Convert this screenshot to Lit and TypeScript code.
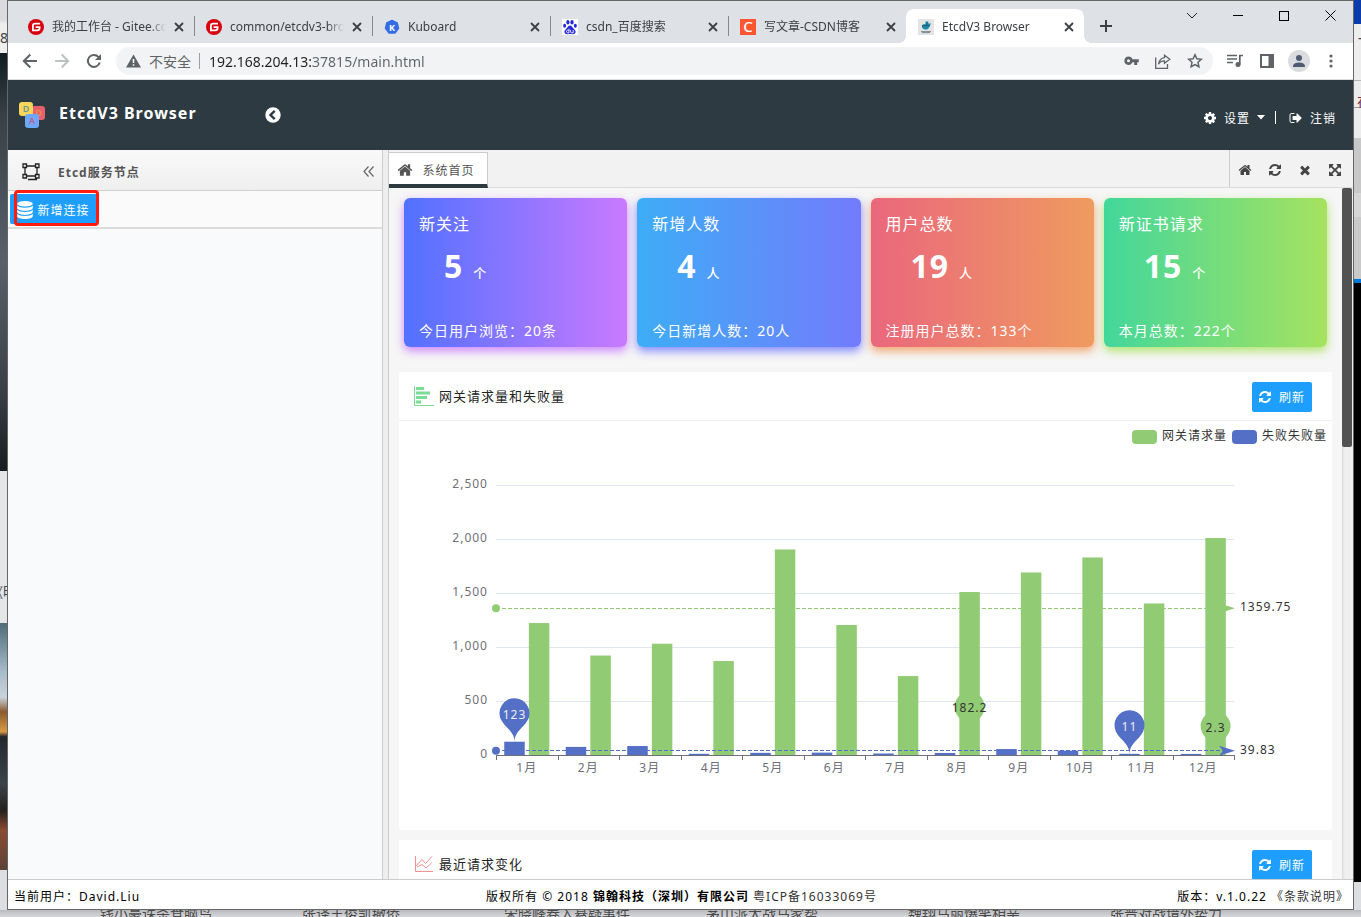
import { LitElement, html, svg, css, nothing } from "lit";
import { customElement, property, state } from "lit/decorators.js";
import { classMap } from "lit/directives/class-map.js";

/* ---------- icons ---------- */

const FA: Record<string, string> = {
  home: "M1472 992v480q0 26-19 45t-45 19h-384v-384h-256v384h-384q-26 0-45-19t-19-45v-480q0-1 .5-3t.5-3l575-474 575 474q1 2 1 6zm223-69l-62 74q-8 9-21 11h-3q-13 0-21-7l-692-577-692 577q-12 8-24 7-13-2-21-11l-62-74q-8-10-7-23.5t11-21.5l719-599q32-26 76-26t76 26l244 204v-195q0-14 9-23t23-9h192q14 0 23 9t9 23v408l219 182q10 8 11 21.5t-7 23.5z",
  refresh: "M1639 1056q0 5-1 7-64 268-268 434.5t-478 166.5q-146 0-282.5-55t-243.5-157l-129 129q-19 19-45 19t-45-19-19-45v-448q0-26 19-45t45-19h448q26 0 45 19t19 45-19 45l-137 137q71 66 161 102t187 36q134 0 250-65t186-179q11-17 53-117 8-23 30-23h192q13 0 22.5 9.5t9.5 22.5zm25-800v448q0 26-19 45t-45 19h-448q-26 0-45-19t-19-45 19-45l138-138q-148-137-349-137-134 0-250 65t-186 179q-11 17-53 117-8 23-30 23h-199q-13 0-22.5-9.5t-9.5-22.5v-7q65-268 270-434.5t480-166.5q146 0 284 55.5t245 156.5l130-129q19-19 45-19t45 19 19 45z",
  times: "M1490 1322q0 40-28 68l-136 136q-28 28-68 28t-68-28l-294-294-294 294q-28 28-68 28t-68-28l-136-136q-28-28-28-68t28-68l294-294-294-294q-28-28-28-68t28-68l136-136q28-28 68-28t68 28l294 294 294-294q28-28 68-28t68 28l136 136q28 28 28 68t-28 68l-294 294 294 294q28 28 28 68z",
  arrows: "M1411 541l-355 355 355 355 144-144q29-31 70-14 39 17 39 59v448q0 26-19 45t-45 19h-448q-42 0-59-40-17-39 14-69l144-144-355-355-355 355 144 144q31 30 14 69-17 40-59 40h-448q-26 0-45-19t-19-45v-448q0-42 40-59 39-17 69 14l144 144 355-355-355-355-144 144q-19 19-45 19-12 0-24-5-40-17-40-59v-448q0-26 19-45t45-19h448q42 0 59 40 17 39-14 69l-144 144 355 355 355-355-144-144q-31-30-14-69 17-40 59-40h448q26 0 45 19t19 45v448q0 42-39 59-13 5-25 5-26 0-45-19z",
  cog: "M1152 896q0-106-75-181t-181-75-181 75-75 181 75 181 181 75 181-75 75-181zm512-109v222q0 12-8 23t-20 13l-185 28q-19 54-39 91 35 50 107 138 10 12 10 25t-9 23q-27 37-99 108t-94 71q-12 0-26-9l-138-108q-44 23-91 38-16 136-29 186-7 28-36 28h-222q-14 0-24.5-8.5t-11.5-21.5l-28-184q-49-16-90-37l-141 107q-10 9-25 9-14 0-25-11-126-114-165-168-7-10-7-23 0-12 8-23 15-21 51-66.5t54-70.5q-27-50-41-99l-183-27q-13-2-21-12.5t-8-23.5v-222q0-12 8-23t19-13l186-28q14-46 39-92-40-57-107-138-10-12-10-24 0-10 9-23 26-36 98.5-107.5t94.5-71.5q13 0 26 10l138 107q44-23 91-38 16-136 29-186 7-28 36-28h222q14 0 24.5 8.5t11.5 21.5l28 184q49 16 90 37l142-107q9-9 24-9 13 0 25 10 129 119 165 170 7 8 7 22 0 12-8 23-15 21-51 66.5t-54 70.5q26 50 41 98l183 28q13 2 21 12.5t8 23.5z",
  signout: "M704 1440q0 4 1 20t.5 26.5-3 23.5-10 19.5-20.5 6.5h-320q-119 0-203.5-84.5t-84.5-203.5v-704q0-119 84.5-203.5t203.5-84.5h320q13 0 22.5 9.5t9.5 22.5q0 4 1 20t.5 26.5-3 23.5-10 19.5-20.5 6.5h-320q-66 0-113 47t-47 113v704q0 66 47 113t113 47h312l11.5 1 11.5 3 8 5.5 7 9 2 13.5zm928-544q0 26-19 45l-544 544q-19 19-45 19t-45-19-19-45v-288h-448q-26 0-45-19t-19-45v-384q0-26 19-45t45-19h448v-288q0-26 19-45t45-19 45 19l544 544q19 19 19 45z",
};

const fa = (name: string, size = 14) =>
  html`<svg width=${size} height=${size} viewBox="0 0 1792 1792" fill="currentColor" aria-hidden="true"><path d=${FA[name]}></path></svg>`;

const gitee = html`<svg width="16" height="16" viewBox="0 0 16 16"><circle cx="8" cy="8" r="8" fill="#d7000f"></circle><path d="M12 4.700H7.200Q4.900 4.700 4.900 7v4.300h4.300q2.400 0 2.400-2.300V8.200H7.600" fill="none" stroke="#fff" stroke-width="1.800"></path></svg>`;
const kuboard = html`<svg width="16" height="16" viewBox="0 0 16 16"><path d="M8 1.500l5.200 2.400 1.300 5.500-3.600 4.600H5.100L1.500 9.400l1.300-5.500z" fill="#326ce5" stroke="#326ce5" stroke-width="1.500" stroke-linejoin="round"></path><text x="8" y="11.500" text-anchor="middle" font-size="9" font-weight="700" fill="#fff" font-family="Noto Sans">K</text></svg>`;
const baidu = html`<svg width="16" height="16" viewBox="0 0 16 16"><rect width="16" height="16" fill="#fff"></rect><g fill="#2529d8"><ellipse cx="5.900" cy="3.200" rx="1.600" ry="2.200"></ellipse><ellipse cx="10" cy="3.200" rx="1.600" ry="2.200"></ellipse><ellipse cx="2.600" cy="6.800" rx="1.500" ry="2"></ellipse><ellipse cx="13.300" cy="6.800" rx="1.500" ry="2"></ellipse><path d="M8 6.500c1.600 0 2.300 1.600 3.500 2.900 1.300 1.300 2.200 2.200 2.100 3.700-.2 1.900-2 2.300-3.400 2.100-1.500-.2-3-.2-4.400 0-1.400.2-3.200-.2-3.400-2.100-.1-1.500.8-2.400 2.100-3.700C5.700 8.100 6.400 6.500 8 6.500z"></path></g><path d="M7 9.800v4H5.600q-1.100-.2-1.100-1.300 0-1.200 1.200-1.300H7M8.600 11v1.800q0 1 1 1h1.600V11" fill="none" stroke="#fff" stroke-width=".9"></path></svg>`;
const csdn = html`<svg width="16" height="16" viewBox="0 0 16 16"><rect width="16" height="16" fill="#fc5531"></rect><text x="8" y="13.300" text-anchor="middle" font-size="15" fill="#fff" font-family="Noto Sans" font-weight="500">C</text></svg>`;
const docker = html`<svg width="16" height="16" viewBox="0 0 16 16"><rect width="16" height="16" fill="#e4e4e4"></rect><path d="M7.500 2.600h2.800v2H13l-1.200 2.300c-.7 2.300-2 3.700-4.100 3.700-2 0-3.500-1-4-3.700l1.400-1.700h2.400z" fill="#2089a8"></path><path d="M4 6.700h7.800M8.800 3.400v3" stroke="#14556d" stroke-width=".8"></path><path d="M3 12.600h10M4 13.600h8" stroke="#7c8a92" stroke-width="1"></path></svg>`;

const closeX = html`<svg width="10" height="10" viewBox="0 0 10 10"><path d="M1 1l8 8M9 1L1 9" stroke="#3c4043" stroke-width="1.800"></path></svg>`;

const DATABASE = html`<svg width="16" height="18" viewBox="0 0 16 18" fill="#fff"><ellipse cx="8" cy="2.800" rx="7.800" ry="2.800"></ellipse><path d="M.2 4.600c1.200 1.500 4.200 2.200 7.800 2.200s6.600-.7 7.800-2.200v2.400c0 1.500-3.500 2.800-7.800 2.800S.2 8.500.2 7z"></path><path d="M.2 8.700c1.200 1.500 4.200 2.200 7.800 2.200s6.600-.7 7.800-2.200v2.400c0 1.500-3.500 2.800-7.800 2.800s-7.800-1.300-7.800-2.800z"></path><path d="M.2 12.800C1.400 14.300 4.400 15 8 15s6.600-.7 7.800-2.200v2.400c0 1.500-3.500 2.800-7.800 2.800S.2 16.700.2 15.200z"></path></svg>`;

/* ---------- bar chart ---------- */

const REQUESTS = [1222, 921, 1030, 870, 1903, 1204, 731, 1509, 1690, 1829, 1403, 2009];
const FAILURES = [123, 75, 83, 11, 20, 22, 14, 19, 55, 40, 11, 10];
const GREEN = "#91cc75";
const BLUE = "#5470c6";

function pinPath(x: number, y: number, size = 50) {
  const r = (size / 5) * 1.5;
  const dy = (r * r) / (size - r);
  const cy = y - size + r + dy;
  const a = Math.asin(dy / r);
  const dx = Math.cos(a) * r;
  const tx = Math.sin(a) * r * 0.6;
  const ty = Math.cos(a) * r * 0.6;
  const c2 = r * 0.7;
  return `M${x - dx} ${cy + dy}A${r} ${r} 0 1 1 ${x + dx} ${cy + dy}C${x + dx - tx} ${cy + dy + ty} ${x} ${y - c2} ${x} ${y}C${x} ${y - c2} ${x - dx + tx} ${cy + dy + ty} ${x - dx} ${cy + dy}Z`;
}

@customElement("bar-chart")
export class BarChart extends LitElement {
  @state() private w = 923;
  private ro?: ResizeObserver;

  static styles = css`
    :host { display: block; height: 390px; }
    svg { display: block; width: 100%; height: 390px; overflow: visible; }
    .axis { font-size: 12px; fill: #6e7079; }
    .label { font-size: 12px; fill: #333; }
    .light { font-size: 12px; fill: #eee; }
  `;

  connectedCallback() {
    super.connectedCallback();
    this.ro = new ResizeObserver(([e]) => {
      const next = Math.round(e.contentRect.width);
      if (next && next !== this.w) this.w = next;
    });
    this.ro.observe(this);
  }

  disconnectedCallback() {
    this.ro?.disconnect();
    super.disconnectedCallback();
  }

  render() {
    const W = this.w;
    const left = Math.round(W * 0.1);
    const right = Math.floor(W * 0.9);
    const base = 330;
    const top = 60;
    const y = (v: number) => base - (v / 2500) * (base - top);
    const band = (right - left) / 12;
    const bw = band / 3;
    const bx = (i: number, s: number) => left + band * i + band * 0.134 + s * band * 0.4;
    const mark = (v: number, color: string) => svg`
      <line x1=${left + 6} x2=${right - 2} y1=${Math.floor(y(v)) + 0.5} y2=${Math.floor(y(v)) + 0.5} stroke=${color} stroke-dasharray="4 2"></line>
      <circle cx=${left} cy=${y(v)} r="4" fill=${color}></circle>
      <path d=${`M${right + 1} ${y(v)}l-16-5 4 5-4 5z`} fill=${color}></path>
      <text class="label" x=${right + 6} y=${Math.round(y(v)) + 3}>${v}</text>`;
    const pin = (i: number, s: number, v: number, color: string, cls: string) => {
      const x = bx(i, s) + bw / 2;
      return svg`<path d=${pinPath(x, y(v))} fill=${color}></path>
        <text class=${cls} text-anchor="middle" x=${x} y=${y(v) - 23}>${v}</text>`;
    };
    return html`<svg role="img" aria-label="网关请求量和失败量">
      <rect x=${W - 195} y="5" width="25" height="14" rx="4" fill=${GREEN}></rect>
      <text class="label" x=${W - 165} y="15">网关请求量</text>
      <rect x=${W - 95} y="5" width="25" height="14" rx="4" fill=${BLUE}></rect>
      <text class="label" x=${W - 65} y="15">失败失败量</text>
      ${[0, 500, 1000, 1500, 2000, 2500].map(
        (v) => svg`
          ${v ? svg`<line x1=${left} x2=${right} y1=${Math.round(y(v)) + 0.5} y2=${Math.round(y(v)) + 0.5} stroke="#e0e6f1"></line>` : nothing}
          <text class="axis" text-anchor="end" x=${left - 8} y=${y(v) + 3}>${v.toLocaleString("en-US")}</text>`
      )}
      ${FAILURES.map((v, i) => svg`<rect x=${bx(i, 0)} y=${y(v)} width=${bw} height=${base - y(v)} fill=${BLUE}></rect>`)}
      ${REQUESTS.map((v, i) => svg`<rect x=${bx(i, 1)} y=${y(v)} width=${bw} height=${base - y(v)} fill=${GREEN}></rect>`)}
      <line x1=${left} x2=${right + 1} y1=${base + 0.5} y2=${base + 0.5} stroke="#6e7079"></line>
      ${Array.from({ length: 13 }, (_, i) => {
        const x = Math.round(left + band * i) + 0.5;
        return svg`<line x1=${x} x2=${x} y1=${base} y2=${base + 5} stroke="#6e7079"></line>`;
      })}
      ${FAILURES.map((_, i) => svg`<text class="axis" text-anchor="middle" x=${left + band * (i + 0.5)} y=${base + 17}>${i + 1}月</text>`)}
      ${mark(39.83, BLUE)} ${mark(1359.75, GREEN)}
      ${pin(0, 0, 123, BLUE, "light")} ${pin(10, 0, 11, BLUE, "light")}
      ${pin(7, 1, 182.2, GREEN, "label")} ${pin(11, 1, 2.3, GREEN, "label")}
    </svg>`;
  }
}

/* ---------- browser frame ---------- */

@customElement("browser-chrome")
export class BrowserChrome extends LitElement {
  private tabs = [
    { icon: gitee, title: "我的工作台 - Gitee.com" },
    { icon: gitee, title: "common/etcdv3-browser" },
    { icon: kuboard, title: "Kuboard" },
    { icon: baidu, title: "csdn_百度搜索" },
    { icon: csdn, title: "写文章-CSDN博客" },
    { icon: docker, title: "EtcdV3 Browser", active: true },
  ];

  static styles = css`
    :host { display: block; }
    button { border: 0; background: none; padding: 0; margin: 0; font: inherit; color: inherit; display: flex; align-items: center; justify-content: center; }
    svg { display: block; }
    .strip { display: flex; height: 42px; background: #dee1e6; padding-left: 8px; align-items: flex-end; }
    .tab { display: flex; align-items: center; height: 34px; width: 178px; box-sizing: border-box; padding: 1px 10px 0 12px; position: relative; font-size: 12px; color: #3c4043; }
    .tab.line::after { content: ""; position: absolute; right: -1px; top: 7px; width: 1px; height: 20px; background: #85888d; }
    .tab.active { background: #fff; border-radius: 8px 8px 0 0; }
    .tab.active::before, .tab.active::after { content: ""; position: absolute; bottom: 0; width: 8px; height: 8px; }
    .tab.active::before { left: -8px; background: radial-gradient(circle at 0 0, transparent 8px, #fff 8px); }
    .tab.active::after { right: -8px; background: radial-gradient(circle at 100% 0, transparent 8px, #fff 8px); }
    .title { flex: 1; min-width: 0; margin: 0 8px; overflow: hidden; white-space: nowrap; line-height: 16px; padding-top: 1px; -webkit-mask-image: linear-gradient(to right, #000 85%, transparent); mask-image: linear-gradient(to right, #000 85%, transparent); }
    .plus { width: 28px; height: 34px; margin-left: 8px; }
    .controls { display: flex; margin-left: auto; align-self: flex-start; }
    .controls button { width: 46px; height: 29px; }
    .bar { display: flex; align-items: center; height: 36px; padding: 0 6px; background: #fff; border-bottom: 1px solid #dadce0; color: #5f6368; }
    .bar button { width: 32px; height: 32px; }
    .box { display: flex; align-items: center; flex: 1; height: 28px; margin: 0 6px; border-radius: 14px; background: #f1f3f4; padding-left: 10px; padding-right: 2px; font-size: 14px; }
    .box .safe { margin: 0 8px; }
    .box .sep { width: 1px; height: 16px; background: #9aa0a6; margin-right: 9px; }
    .url { flex: 1; min-width: 0; border: 0; outline: 0; padding: 0; height: 22px; font: inherit; color: transparent; background-image: linear-gradient(to right, #202124 104px, #5f6368 104px); -webkit-background-clip: text; background-clip: text; }
    .avatar { width: 22px; height: 22px; border-radius: 11px; background: #dadce0; display: flex; align-items: center; justify-content: center; }
  `;

  render() {
    return html`
      <div class="strip" role="tablist">
        ${this.tabs.map(
          (t, i) => html`<div class=${classMap({ tab: true, active: !!t.active, line: i < 4 })} role="tab">
            ${t.icon}<span class="title">${t.title}</span><button aria-label="关闭">${closeX}</button>
          </div>`
        )}
        <button class="plus" aria-label="新标签页"><svg width="12" height="12"><path d="M6 0v12M0 6h12" stroke="#3c4043" stroke-width="2"></path></svg></button>
        <div class="controls">
          <button aria-label="搜索标签页"><svg width="12" height="8"><path d="M1 1l5 5 5-5" fill="none" stroke="#222"></path></svg></button>
          <button aria-label="最小化"><svg width="10" height="1"><rect width="10" height="1"></rect></svg></button>
          <button aria-label="最大化"><svg width="10" height="10"><rect x=".5" y=".5" width="9" height="9" fill="none" stroke="#000"></rect></svg></button>
          <button aria-label="关闭窗口"><svg width="11" height="11"><path d="M.5.5l10 10M10.500.5l-10 10" stroke="#000"></path></svg></button>
        </div>
      </div>
      <div class="bar">
        <button aria-label="后退"><svg width="16" height="16"><path d="M15 8H2M8.300 1.500L1.800 8l6.500 6.500" fill="none" stroke="#5f6368" stroke-width="2"></path></svg></button>
        <button aria-label="前进"><svg width="16" height="16"><path d="M1 8h13M7.700 1.500L14.200 8l-6.500 6.500" fill="none" stroke="#bdc1c6" stroke-width="2"></path></svg></button>
        <button aria-label="重新加载"><svg width="16" height="16"><path d="M13.700 9.500A6 6 0 1 1 12.400 3.900L14 5.500" fill="none" stroke="#5f6368" stroke-width="2"></path><path d="M15 1v6H9z" fill="#5f6368"></path></svg></button>
        <div class="box">
          <svg width="15" height="14" viewBox="0 0 15 14"><path d="M7.500.5l7.500 13H0z" fill="#5f6368"></path><path d="M7.500 5v4M7.500 10.200v1.600" stroke="#fff" stroke-width="1.500"></path></svg>
          <span class="safe">不安全</span><span class="sep"></span>
          <input class="url" aria-label="地址栏" .value=${"192.168.204.13:37815/main.html"} />
          <button aria-label="密码"><svg width="15" height="10" viewBox="0 0 15 10"><path d="M4.500.5a4.200 4.200 0 0 1 4 2.800H14.800v3h-1.600v2.800h-3V6.300H8.500A4.200 4.200 0 1 1 4.500.5zm0 2.700a1.500 1.500 0 1 0 0 3.100 1.500 1.500 0 0 0 0-3.100z" fill="#5f6368"></path></svg></button>
          <button aria-label="分享"><svg width="16" height="15" viewBox="0 0 16 15"><path d="M.7 3.500v10.800h11.800V10M9.500 1.200l5.300 4-5.300 4V6.900C6.500 6.800 4.600 8 3.500 10.300 4 6.600 6 4 9.500 3.600z" fill="none" stroke="#5f6368" stroke-width="1.300"></path></svg></button>
          <button aria-label="收藏"><svg width="16" height="16" viewBox="0 0 16 16"><path d="M8 1.800l1.900 4 4.400.5-3.300 3 .9 4.400L8 11.500l-3.900 2.200.9-4.400-3.300-3 4.400-.5z" fill="none" stroke="#5f6368" stroke-width="1.500"></path></svg></button>
        </div>
        <button aria-label="媒体"><svg width="16" height="14" viewBox="0 0 16 14"><path d="M0 1.500h10M0 5h10M0 8.500h6M12.800 10.500V1.500H16" fill="none" stroke="#5f6368" stroke-width="1.700"></path><circle cx="11" cy="10.600" r="2.500" fill="#5f6368"></circle></svg></button>
        <button aria-label="侧边栏"><svg width="14" height="14"><path d="M0 0h14v14H0zM2 2v10h6.500V2z" fill="#5f6368" fill-rule="evenodd"></path></svg></button>
        <button aria-label="用户"><span class="avatar"><svg width="12" height="12"><circle cx="6" cy="3" r="3" fill="#4f5b73"></circle><path d="M0 12v-1.500Q1 7.500 6 7.500t6 3V12z" fill="#4f5b73"></path></svg></span></button>
        <button aria-label="菜单"><svg width="4" height="14" fill="#5f6368"><circle cx="2" cy="2" r="1.600"></circle><circle cx="2" cy="7" r="1.600"></circle><circle cx="2" cy="12" r="1.600"></circle></svg></button>
      </div>
    `;
  }
}

/* ---------- dashboard panel ---------- */

@customElement("dash-panel")
export class DashPanel extends LitElement {
  @property() heading = "";
  @property() kind: "bars" | "lines" = "bars";

  static styles = css`
    :host { display: block; background: #fff; border-radius: 2px; }
    header { display: flex; align-items: center; height: 48px; border-bottom: 1px solid #eee; padding: 0 20px 0 15px; }
    h2 { margin: 0; margin-left: 4px; font-size: 13px; line-height: 20px; font-weight: 400; color: #222; }
    button { display: flex; align-items: center; gap: 7px; height: 30px; width: 60px; margin-left: auto; margin-top: 2px; padding: 0 0 0 6px; border: 0; border-radius: 2px; background: #1e9fff; color: #fff; font: inherit; letter-spacing: inherit; white-space: nowrap; }
    svg { display: block; flex: none; }
    .body { padding: 4px 5px 15px; }
  `;

  render() {
    const icon =
      this.kind === "bars"
        ? html`<svg width="21" height="20"><path d="M.5 0v19.500H20" fill="none" stroke="#7bdc96"></path><path d="M2 1h8v3H2zM2 5.500h14v3H2zM2 10h11v3H2zM2 14.500h5v3H2z" fill="#7bdc96"></path></svg>`
        : html`<svg width="21" height="20"><path d="M1.500 2v15.500H19M2 12l6-6.500 3.500 4L18 2.500M3 13l5-2.500 4 3.500 5.500-5" fill="none" stroke="#f0928f"></path></svg>`;
    return html`<header>${icon}<h2>${this.heading}</h2><button>${fa("refresh")}<span>刷新</span></button></header>
      <div class="body"><slot></slot></div>`;
  }
}

/* ---------- application ---------- */

@customElement("app-root")
export class AppRoot extends LitElement {
  private cards = [
    { cls: "violet", title: "新关注", n: 5, unit: "个", foot: "今日用户浏览：20条" },
    { cls: "azure", title: "新增人数", n: 4, unit: "人", foot: "今日新增人数：20人" },
    { cls: "coral", title: "用户总数", n: 19, unit: "人", foot: "注册用户总数：133个" },
    { cls: "lime", title: "新证书请求", n: 15, unit: "个", foot: "本月总数：222个" },
  ];
  private headlines = ["钱小豪诛杀食脑鸟", "张译王俊凯撤侨", "宋晓峰卷入悬疑事件", "茅山派大战马家帮", "魏翔马丽爆笑相亲", "张晋对战境外势力"];

  static styles = css`
    :host { display: grid; grid-template-columns: 7px minmax(0, 1fr) 7px; grid-template-rows: minmax(0, 1fr) 7px; height: 100vh; overflow: hidden; background: #dcdee2; font-family: "Noto Sans", "Noto Sans CJK SC", sans-serif; font-size: 12px; }
    svg { display: block; flex: none; }
    button { font: inherit; letter-spacing: inherit; color: inherit; border: 0; background: none; padding: 0; margin: 0; display: flex; align-items: center; justify-content: center; white-space: nowrap; }
    a { color: inherit; text-decoration: none; }

    .behind { display: flex; flex-direction: column; overflow: hidden; white-space: nowrap; font-size: 14px; color: #444; }
    .l1 { height: 53px; background: linear-gradient(#d8dadd 20px, #eee 24px); line-height: 76px; }
    .l2 { height: 418px; background: linear-gradient(#101c22, #3a4048 15%, #596069 50%, #3c4148 80%, #191c20); }
    .l3 { height: 152px; background: #e3e5e7; line-height: 242px; text-indent: -11px; }
    .l4 { height: 247px; background: linear-gradient(#4d6b78, #a9bcc9 20%, #c9d3dd 30%, #8a5b2c 36%, #d79a45 44%, #23272c 46%, #3b434b 65%, #26201c 76%, #8b4a33 84%, #5a4438); }
    .r1 { height: 24px; background: #0b3cae; }
    .r2 { height: 56px; background: #ededed; border-bottom: 1px solid #b5b5b5; line-height: 28px; text-indent: 4px; }
    .r3 { height: 26px; background: #ececec; border-bottom: 1px solid #999; line-height: 42px; color: #734; text-indent: 3px; }
    .r4 { height: 30px; background: #ececec; }
    .r5 { height: 141px; background: linear-gradient(#c8c8c8 55px, #d6d6d6 55px, #d6d6d6 79px, #c9c9c9 79px); }
    .r6 { height: 4px; background: #0078d7; }
    .r7 { height: 599px; background: #000; }
    .bottom { grid-column: 1 / -1; overflow: hidden; background: linear-gradient(#b9babd, #d6d7da); padding-left: 100px; display: grid; grid-template-columns: repeat(6, 202px); font-size: 14px; line-height: 8px; color: #4a4a4a; white-space: nowrap; }

    .window { display: flex; flex-direction: column; min-width: 0; border: 1px solid #666; background: #fff; }
    .page { display: flex; flex-direction: column; flex: 1; min-height: 0; letter-spacing: 1px; color: #333; }

    .top { display: flex; align-items: center; height: 70px; background: #2d3a42; color: #fff; padding: 0 17px 0 11px; }
    .top h1 { width: 206px; margin: 0 0 4px 13px; font-size: 16px; line-height: 24px; font-weight: 700; }
    .user { display: flex; align-items: center; margin-left: auto; padding-top: 5px; }
    .user button { gap: 7px; }
    .bar { width: 1px; height: 13px; background: #fff; margin: 0 13px 0 10px; }

    .work { display: flex; flex: 1; min-height: 0; }
    .side { display: flex; flex-direction: column; border-right: 1px solid #ccc; background: #f8fafc; position: relative; box-sizing: border-box; flex: none; width: 375px; }
    .side header { display: flex; align-items: center; height: 37px; padding: 3px 8px 0 14px; border-bottom: 1px solid #d0d0d0; background: linear-gradient(#f9f9f9, #efefef); }
    .side h2 { margin: 0 auto 0 18px; padding-top: 2px; font-size: 12px; line-height: 18px; color: #555; font-weight: 700; }
    .tools { display: flex; background: #fafafa; border-bottom: 2px solid #ddd; padding: 3px 0 0 2px; box-sizing: border-box; height: 38px; }
    .add { width: 87px; height: 30px; background: #1e9fff; color: #fff; border-radius: 2px; gap: 4px; padding-top: 2px; }
    .ring { position: absolute; left: 6px; top: 40px; width: 85px; height: 36px; box-sizing: border-box; border: 3px solid #ff1c0f; border-radius: 4px; pointer-events: none; }
    .split { width: 5px; background: #eee; border-right: 1px solid #ccc; flex: none; }

    .main { display: flex; flex-direction: column; flex: 1; min-width: 0; background: #f6f6f6; }
    .tabs { display: flex; height: 37px; background: #f2f2f2; border-bottom: 1px solid #ddd; }
    .tab { width: 99px; height: 36px; margin-top: 2px; box-sizing: border-box; background: #fff; border: 1px solid #ccc; border-left: 0; border-bottom: 4px solid #2d3a42; gap: 9px; padding: 2px 4px 0 0; color: #555; }
    .icons { display: flex; margin-left: auto; border-left: 1px solid #ccc; padding: 2px 3px 0 0; color: #444; }
    .icons button { width: 30px; }
    .scroll { display: flex; flex: 1; min-height: 0; }
    .content { flex: 1; min-width: 0; overflow: hidden; padding: 10px 10px 0; }
    .track { width: 10px; background: linear-gradient(to right, #dcdcdc, #efefef 3px); padding-right: 1px; }
    .thumb { height: 259px; background: #525252; border-radius: 2px; }

    .cards { display: grid; grid-template-columns: repeat(4, minmax(0, 1fr)); gap: 10px; margin: 0 5px 25px; }
    .card { display: flex; flex-direction: column; height: 149px; box-sizing: border-box; padding: 14px 15px 5px; border-radius: 6px; color: #fff; }
    .violet { background: linear-gradient(to right, #5171ff, #c97aff); box-shadow: 0 4px 10px rgba(201, 122, 255, .9); }
    .azure { background: linear-gradient(to right, #3dadf6, #737bfc); box-shadow: 0 4px 10px rgba(115, 123, 252, .9); }
    .coral { background: linear-gradient(to right, #ea677c, #ef9b5f); box-shadow: 0 4px 10px rgba(239, 155, 95, .9); }
    .lime { background: linear-gradient(to right, #42d79b, #a6e25f); box-shadow: 0 4px 10px rgba(166, 226, 95, .9); }
    .card h3 { margin: 0; font-size: 16px; line-height: 24px; font-weight: 400; }
    .num { display: flex; align-items: baseline; gap: 10px; padding-left: 25px; margin-top: 6px; font-size: 32px; line-height: 48px; font-weight: 700; }
    .num small { font-size: 13px; font-weight: 500; }
    .card p { margin: auto 0 0; font-size: 14px; line-height: 22px; }
    .gap { height: 10px; }

    .foot { display: grid; grid-template-columns: 1fr auto 1fr; align-items: center; height: 26px; padding: 3px 4px 0 6px; border-top: 1px solid #ccc; background: #fff; color: #000; white-space: nowrap; }
    .foot a { color: #333; }
    .right { text-align: right; }
  `;

  render() {
    return html`
      <div class="behind"><div class="l1">8</div><div class="l2"></div><div class="l3">《明</div><div class="l4"></div></div>
      <div class="window">
        <browser-chrome></browser-chrome>
        <div class="page">
          <header class="top">
            <svg width="27" height="28" viewBox="0 0 27 28" font-family="Noto Sans" font-size="9" font-weight="600" text-anchor="middle">
              <rect x="12" y="5" width="14" height="14" rx="3" fill="#e8606e"></rect><text x="20" y="15" fill="#e8903e">D</text>
              <rect x="0" y="1" width="14" height="14" rx="3" fill="#f6d75c"></rect><text x="7.500" y="11" fill="#6d9a8c">D</text>
              <rect x="6" y="13" width="14" height="14" rx="3" fill="#6ea8fe"></rect><text x="13.500" y="23" fill="#c45a86">A</text>
            </svg>
            <h1>EtcdV3 Browser</h1>
            <button aria-label="收起菜单"><svg width="16" height="16"><circle cx="8" cy="8" r="7.700" fill="#fff"></circle><path d="M9.700 3.800L5.500 8l4.200 4.200" fill="none" stroke="#2d3a42" stroke-width="2.400"></path></svg></button>
            <div class="user">
              <button>${fa("cog")}<span>设置</span><svg width="8" height="5"><path d="M0 0h8L4 4.500z" fill="#fff"></path></svg></button>
              <span class="bar"></span>
              <button>${fa("signout")}<span>注销</span></button>
            </div>
          </header>
          <div class="work">
            <aside class="side">
              <header>
                <svg width="18" height="18" viewBox="0 0 18 18" fill="none" stroke="#222"><path d="M3.500 3h11M3.500 13h11M3 4v8.500M15 4v8.500" stroke-width="1.300"></path><path d="M1 1h3.500v3.500H1zM13.500 1H17v3.500h-3.500zM1 11.500h3.500V15H1zM13.500 11.500H17V15h-3.500zM6 16.500h9" stroke-width="1.300" fill="#eee"></path></svg>
                <h2>Etcd服务节点</h2>
                <button aria-label="折叠"><svg width="11" height="11"><path d="M5.500.5L1 5.500l4.500 5M10.500.5L6 5.500l4.500 5" fill="none" stroke="#666" stroke-width="1.200"></path></svg></button>
              </header>
              <div class="tools"><button class="add">${DATABASE}<span>新增连接</span></button></div>
              <div class="ring"></div>
            </aside>
            <div class="split"></div>
            <main class="main">
              <nav class="tabs">
                <button class="tab">${fa("home", 16)}<span>系统首页</span></button>
                <div class="icons">
                  <button aria-label="首页">${fa("home")}</button>
                  <button aria-label="刷新">${fa("refresh")}</button>
                  <button aria-label="关闭">${fa("times")}</button>
                  <button aria-label="全屏">${fa("arrows")}</button>
                </div>
              </nav>
              <div class="scroll">
                <div class="content">
                  <section class="cards">
                    ${this.cards.map(
                      (c) => html`<article class="card ${c.cls}"><h3>${c.title}</h3>
                        <div class="num"><span>${c.n}</span><small>${c.unit}</small></div><p>${c.foot}</p></article>`
                    )}
                  </section>
                  <dash-panel heading="网关请求量和失败量"><bar-chart></bar-chart></dash-panel>
                  <div class="gap"></div>
                  <dash-panel heading="最近请求变化" kind="lines"></dash-panel>
                </div>
                <div class="track"><div class="thumb"></div></div>
              </div>
            </main>
          </div>
          <footer class="foot">
            <span>当前用户：David.Liu</span>
            <span>版权所有 © 2018 <b>锦翰科技（深圳）有限公司</b> <a href="#icp">粤ICP备16033069号</a></span>
            <span class="right">版本：v.1.0.22 <a href="#terms">《条款说明》</a></span>
          </footer>
        </div>
      </div>
      <div class="behind"><div class="r1"></div><div class="r2">—</div><div class="r3">在</div><div class="r4"></div><div class="r5"></div><div class="r6"></div><div class="r7"></div></div>
      <div class="bottom">${this.headlines.map((h) => html`<span>${h}</span>`)}</div>
    `;
  }
}
